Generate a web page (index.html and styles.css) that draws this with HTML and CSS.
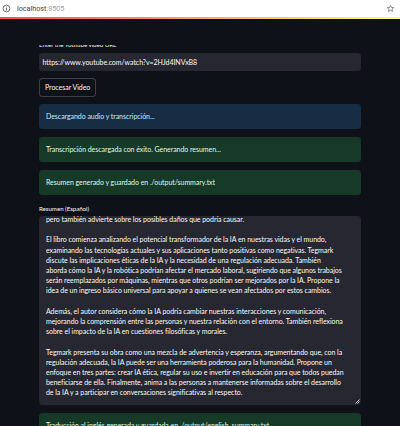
FILE: index.html
```html
<!DOCTYPE html>
<html lang="es">
<head>
    <meta charset="UTF-8">
    <meta name="viewport" content="width=device-width, initial-scale=1.0">
    <title>Resumen de Video</title>
    <link rel="stylesheet" href="styles.css">
</head>
<body>

    <div class="chrome">
        <svg class="site-info" width="9" height="9" viewBox="0 0 9 9">
            <circle cx="4.5" cy="4.5" r="3.4" fill="none" stroke="#5f6368" stroke-width="0.9"/>
            <rect x="4.05" y="4" width="0.9" height="2.4" fill="#5f6368"/>
            <rect x="4.05" y="2.6" width="0.9" height="0.9" fill="#5f6368"/>
        </svg>
        <span class="url">localhost<span class="port">:8505</span></span>
        <svg class="star" width="9" height="9" viewBox="0 0 24 24">
            <path d="M12 3.5l2.6 5.6 6.1.6-4.6 4.1 1.3 6-5.4-3.1-5.4 3.1 1.3-6-4.6-4.1 6.1-.6z" fill="none" stroke="#5f6368" stroke-width="2" stroke-linejoin="round"/>
        </svg>
    </div>
    <div class="decoration"></div>

    <div class="app">
        <!-- streamlit header sits over the scrolled content -->
        <div class="app-header"></div>

        <div class="main">
            <label class="widget-label">Enter the YouTube video URL</label>
            <div class="text-input">https://www.youtube.com/watch?v=2HJd4INVxB8</div>

            <button class="btn">Procesar Video</button>

            <div class="alert info">Descargando audio y transcripción...</div>
            <div class="alert success">Transcripción descargada con éxito. Generando resumen...</div>
            <div class="alert success">Resumen generado y guardado en ./output/summary.txt</div>

            <label class="widget-label summary-label">Resumen (Español)</label>
            <div class="text-area">
                <div class="text-area-content">
                    pero también advierte sobre los posibles daños que podría causar.<br>
                    <br>
                    El libro comienza analizando el potencial transformador de la IA en nuestras vidas y el mundo,<br>
                    examinando las tecnologías actuales y sus aplicaciones tanto positivas como negativas. Tegmark<br>
                    discute las implicaciones éticas de la IA y la necesidad de una regulación adecuada. También<br>
                    aborda cómo la IA y la robótica podrían afectar el mercado laboral, sugiriendo que algunos trabajos<br>
                    serán reemplazados por máquinas, mientras que otros podrían ser mejorados por la IA. Propone la<br>
                    idea de un ingreso básico universal para apoyar a quienes se vean afectados por estos cambios.<br>
                    <br>
                    Además, el autor considera cómo la IA podría cambiar nuestras interacciones y comunicación,<br>
                    mejorando la comprensión entre las personas y nuestra relación con el entorno. También reflexiona<br>
                    sobre el impacto de la IA en cuestiones filosóficas y morales.<br>
                    <br>
                    Tegmark presenta su obra como una mezcla de advertencia y esperanza, argumentando que, con la<br>
                    regulación adecuada, la IA puede ser una herramienta poderosa para la humanidad. Propone un<br>
                    enfoque en tres partes: crear IA ética, regular su uso e invertir en educación para que todos puedan<br>
                    beneficiarse de ella. Finalmente, anima a las personas a mantenerse informadas sobre el desarrollo<br>
                    de la IA y a participar en conversaciones significativas al respecto.
                </div>
                <svg class="resize-handle" width="5" height="5" viewBox="0 0 5 5">
                    <path d="M4.5 0.5L0.5 4.5M4.5 2.5L2.5 4.5" stroke="#e6e6e6" stroke-width="0.9"/>
                </svg>
            </div>

            <div class="alert success">Traducción al inglés generada y guardada en ./output/english_summary.txt</div>
        </div>
    </div>

</body>
</html>
```

FILE: styles.css
```css
body {
    margin: 0;
    width: 400px;
    height: 426px;
    overflow: hidden;
    background-color: #0e1117;
    font-family: Lato, "Open Sans", sans-serif;
}

/* Browser address bar */
.chrome {
    height: 17px;
    background-color: #ffffff;
    display: flex;
    align-items: center;
    padding: 0 5px 0 2px;
}
.site-info {
    margin-right: 6px;
}
.url {
    font-family: Roboto, "Liberation Sans", sans-serif;
    font-size: 7.2px;
    color: #3c4043;
}
.url .port {
    color: #9aa0a6;
}
.star {
    margin-left: auto;
}
.decoration {
    height: 2px;
    background: linear-gradient(90deg, rgb(255, 75, 75), rgb(255, 253, 128));
}

/* Streamlit app */
.app {
    position: relative;
    height: 407px;
    overflow: hidden;
}
.app-header {
    position: absolute;
    top: 0;
    left: 0;
    right: 0;
    height: 26px;
    background-color: #0e1117;
    z-index: 2;
}
.main {
    width: 322px;
    margin: 0 auto;
    padding-top: 21px;
    display: flex;
    flex-direction: column;
    align-items: flex-start;
    color: #fafafa;
    font-size: 7px;
    letter-spacing: -0.05px;
}
.widget-label {
    font-size: 6.2px;
    line-height: 9px;
    height: 9px;
    color: #fafafa;
}
.text-input {
    margin-top: 4px;
    width: 100%;
    box-sizing: border-box;
    height: 18px;
    line-height: 18px;
    padding: 0 3.5px;
    background-color: #262730;
    border-radius: 3.5px;
}
.btn {
    margin-top: 7px;
    height: 18.5px;
    padding: 0 5px;
    background-color: #0e1117;
    color: #fafafa;
    border: 1px solid rgba(250, 250, 250, 0.2);
    border-radius: 3.5px;
    font-family: inherit;
    font-size: 7px;
    letter-spacing: -0.05px;
}
.alert {
    width: 100%;
    box-sizing: border-box;
    height: 25px;
    line-height: 25px;
    padding: 0 7px;
    border-radius: 3.5px;
    margin-top: 8px;
    white-space: nowrap;
    overflow: hidden;
}
.btn + .alert {
    margin-top: 7.5px;
}
.info {
    background-color: #172d43;
    color: #c7ebff;
}
.success {
    background-color: #173928;
    color: #dffde9;
}
.summary-label {
    margin-top: 9px;
}
.text-area {
    position: relative;
    margin-top: 3px;
    width: 100%;
    box-sizing: border-box;
    height: 189px;
    padding: 0 7px;
    background-color: #262730;
    border-radius: 3.5px;
    overflow: hidden;
}
.text-area-content {
    margin-top: -2px;
    line-height: 10.2px;
    white-space: nowrap;
}
.resize-handle {
    position: absolute;
    right: 1px;
    bottom: 1px;
}
```
